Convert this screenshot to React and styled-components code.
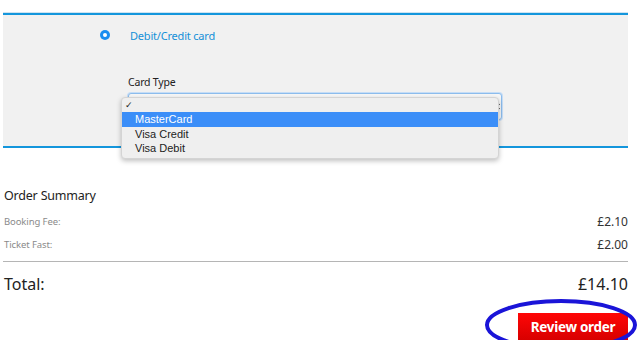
import React from "react";
import styled, { createGlobalStyle } from "styled-components";

const Global = createGlobalStyle`
  html, body { margin: 0; padding: 0; background: #fff; }
  body { font-family: "Noto Sans", "Open Sans", sans-serif; color: #222; }
`;

const Page = styled.div`
  width: 625px;
  padding: 13px 0 0 3px;
`;

const PaymentPanel = styled.section`
  background: #f1f1f1;
  border-top: 2px solid #1496dc;
  border-bottom: 2px solid #1496dc;
  height: 131px;
  box-sizing: content-box;
  box-shadow: 0 -1px 0 #cfe3f0;
`;

const OptionRow = styled.div`
  display: flex;
  align-items: center;
  gap: 20px;
  padding: 12px 0 0 97px;
  height: 16px;
`;

const Radio = styled.span`
  width: 10px;
  height: 10px;
  border-radius: 50%;
  background: #1a8ef0;
  display: flex;
  align-items: center;
  justify-content: center;
  &::after {
    content: "";
    width: 4px;
    height: 4px;
    border-radius: 50%;
    background: #fff;
  }
`;

const OptionLabel = styled.span`
  color: #1590d8;
  font-size: 11px;
  letter-spacing: -0.2px;
`;

const CardField = styled.div`
  padding: 32px 0 0 125px;
`;

const FieldLabel = styled.div`
  font-size: 10.5px;
  color: #222;
  letter-spacing: -0.2px;
  height: 14px;
  line-height: 14px;
`;

const SelectWrap = styled.div`
  position: relative;
  margin-top: 4px;
  width: 374px;
`;

const SelectBox = styled.div`
  height: 25px;
  border: 1px solid #8cbcec;
  border-radius: 3px;
  box-shadow: 0 0 0 1px #c6ddf6;
  background: #f7f7f7;
  display: flex;
  justify-content: flex-end;
  align-items: center;
  padding-right: 1px;
`;

const Arrows = styled.svg`
  width: 5px;
  height: 11px;
`;

const Menu = styled.ul`
  position: absolute;
  left: -7px;
  top: 4px;
  width: 376px;
  margin: 0;
  padding: 0 0 3px;
  list-style: none;
  background: #efefef;
  border: 1px solid #d4d4d4;
  border-radius: 4px;
  box-shadow: 0 2px 5px rgba(0, 0, 0, 0.25);
  font-family: "Liberation Sans", Arial, sans-serif;
  font-size: 11px;
  color: #222;
  z-index: 2;
`;

const MenuItem = styled.li`
  height: 14px;
  line-height: 14px;
  padding-left: ${(p) => (p.$check ? "3px" : "13px")};
  background: ${(p) => (p.$active ? "#3b8ef8" : "transparent")};
  color: ${(p) => (p.$active ? "#fff" : "#222")};
  font-size: ${(p) => (p.$check ? "9px" : "11px")};
  ${(p) => p.$active && "height: 15px; line-height: 15px;"}
`;

const Summary = styled.section`
  padding-top: 40px;
`;

const SummaryTitle = styled.h2`
  margin: 0 0 0 1px;
  font-size: 12.5px;
  font-weight: 400;
  color: #222;
  letter-spacing: -0.2px;
  line-height: 16px;
`;

const FeeRow = styled.div`
  display: flex;
  justify-content: space-between;
  align-items: baseline;
  padding-left: 1px;
  height: 23px;
  line-height: 23px;
  &:first-of-type { margin-top: 6px; }
`;

const FeeLabel = styled.span`
  font-size: 9.5px;
  color: #8a8a8a;
  letter-spacing: -0.1px;
  position: relative;
  top: -1px;
`;

const FeeValue = styled.span`
  font-size: 12px;
  color: #333;
`;

const Divider = styled.hr`
  margin: 5px 0 0;
  border: 0;
  border-top: 1px solid #b5b5b5;
`;

const TotalRow = styled.div`
  display: flex;
  justify-content: space-between;
  padding: 12px 0 0 1px;
  font-size: 16px;
  line-height: 20px;
  color: #222;
`;

const ActionRow = styled.div`
  position: relative;
  display: flex;
  justify-content: flex-end;
  margin-top: 19px;
`;

const ReviewButton = styled.button`
  width: 110px;
  height: 27px;
  border: 0;
  border-radius: 0;
  padding: 0;
  background: linear-gradient(#ff0606, #d80000);
  color: #fff;
  font-family: "Noto Sans", "Open Sans", sans-serif;
  font-weight: 700;
  font-size: 13.5px;
  letter-spacing: -0.3px;
`;

const Annotation = styled.svg`
  position: absolute;
  right: -12px;
  top: -16px;
  width: 156px;
  height: 56px;
  pointer-events: none;
`;

export default function App() {
  return (
    <>
      <Global />
      <Page>
        <PaymentPanel>
          <OptionRow>
            <Radio />
            <OptionLabel>Debit/Credit card</OptionLabel>
          </OptionRow>
          <CardField>
            <FieldLabel>Card Type</FieldLabel>
            <SelectWrap>
              <SelectBox>
                <Arrows viewBox="0 0 5 11">
                  <path d="M2.5 0.5 L5 4 L0 4 Z M0 7 L5 7 L2.5 10.5 Z" fill="#222" />
                </Arrows>
              </SelectBox>
              <Menu>
                <MenuItem $check>✓</MenuItem>
                <MenuItem $active>MasterCard</MenuItem>
                <MenuItem>Visa Credit</MenuItem>
                <MenuItem>Visa Debit</MenuItem>
              </Menu>
            </SelectWrap>
          </CardField>
        </PaymentPanel>
        <Summary>
          <SummaryTitle>Order Summary</SummaryTitle>
          <FeeRow>
            <FeeLabel>Booking Fee:</FeeLabel>
            <FeeValue>£2.10</FeeValue>
          </FeeRow>
          <FeeRow>
            <FeeLabel>Ticket Fast:</FeeLabel>
            <FeeValue>£2.00</FeeValue>
          </FeeRow>
          <Divider />
          <TotalRow>
            <span>Total:</span>
            <span>£14.10</span>
          </TotalRow>
          <ActionRow>
            <ReviewButton>Review order</ReviewButton>
            <Annotation viewBox="0 0 156 56">
              <ellipse cx="77" cy="28" rx="74" ry="24" fill="none" stroke="#1a14d8" strokeWidth="4" />
            </Annotation>
          </ActionRow>
        </Summary>
      </Page>
    </>
  );
}
